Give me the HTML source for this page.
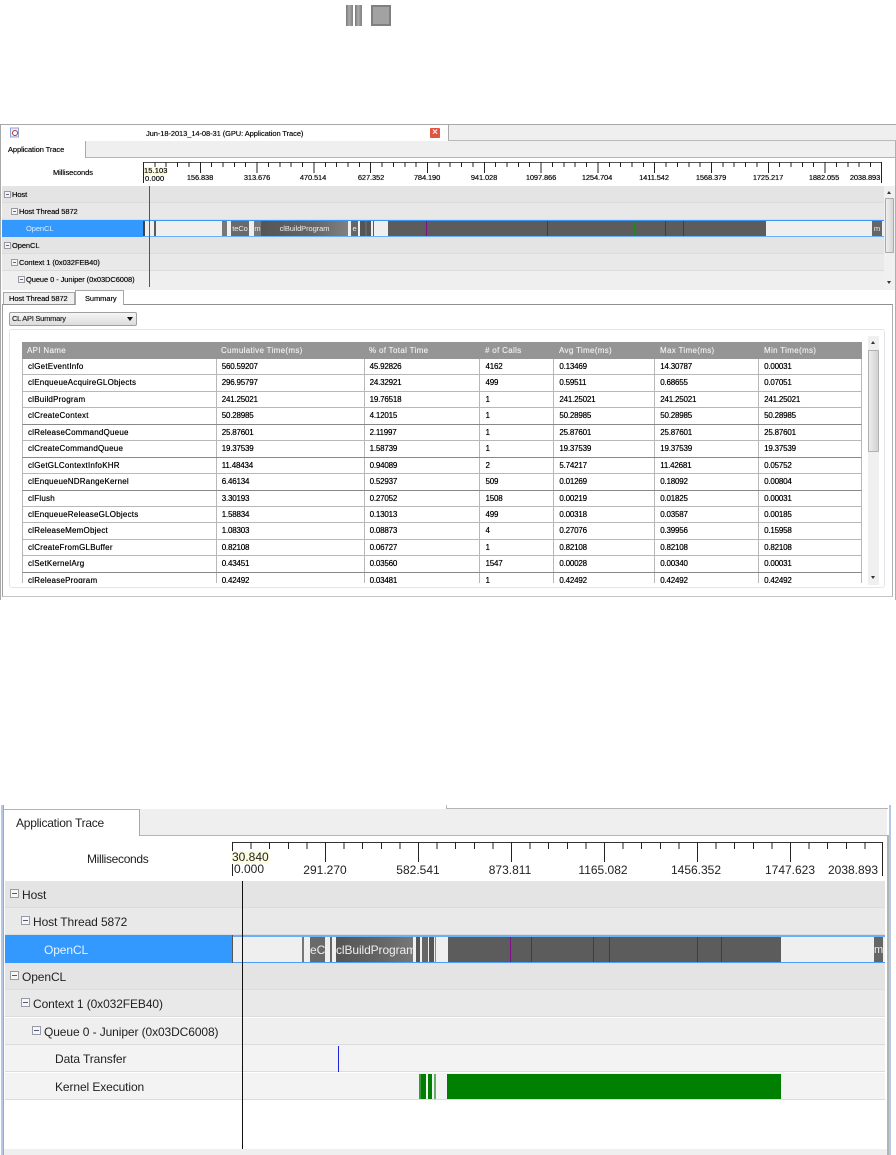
<!DOCTYPE html>
<html><head><meta charset="utf-8"><title>Application Trace</title>
<style>
html,body{margin:0;padding:0;background:#fff}
body{width:896px;height:1155px;position:relative;overflow:hidden;font-family:"Liberation Sans",sans-serif;color:#111}
.a{position:absolute}
.t{position:absolute;white-space:nowrap}
#top{position:absolute;left:0;top:0;width:896px;height:620px;font-size:7.5px;letter-spacing:-.08px;filter:blur(.2px);text-shadow:0 0 .4px #000}
.lab{position:absolute;top:173px;width:60px;text-align:center;font-size:7.5px;line-height:10px;color:#111;letter-spacing:-.12px}
.row{position:absolute;left:2px;width:882px;height:17px;box-sizing:border-box;border-bottom:1px solid #dcdcdc;line-height:18px;font-size:7.5px}
.box{position:absolute;top:5px;left:0;width:5px;height:5px;border:1px solid #9a9aa4;background:#f4f4f4}
.box:after{content:"";position:absolute;left:1px;top:2px;width:3px;height:1px;background:#667}
.b{position:absolute;background:#5c5c5c}
.txtb{color:#eee;text-align:center;overflow:hidden;white-space:nowrap}
#tbl{position:absolute;left:22px;top:342px;width:840px;height:241px;overflow:hidden;font-size:8px}
.r{display:flex;height:16.44px;box-sizing:border-box;border-bottom:1px solid #b8b8b8;border-left:1px solid #b8b8b8;border-right:1px solid #b8b8b8;line-height:16.5px;color:#000}
.r.d{border-bottom-color:#888}
.r.h{background:#959595;color:#eee;border:0;height:17px;line-height:18px;text-shadow:0 0 .4px #eee}
.r span{display:block;box-sizing:border-box;padding-left:5px;border-right:1px solid #b8b8b8;height:100%;overflow:hidden;white-space:nowrap;letter-spacing:-.2px}
.r .c1{letter-spacing:.22px}
.r.h span{border-right:0;letter-spacing:.32px}
.c1{width:194px}.c2{width:148px}.c3{width:116px}.c4{width:74px}.c5{width:101px}.c6{width:104px}.c7{width:102px;border-right:0!important}
.row2{position:absolute;left:5px;width:880px;height:27.4px;box-sizing:border-box;border-bottom:1px solid #dcdcdc;line-height:28px;font-size:12px;color:#222;letter-spacing:-.1px}
.box2{position:absolute;top:8px;width:7px;height:7px;border:1px solid #9a9aa4;background:#f6f6f6}
.box2:after{content:"";position:absolute;left:1px;top:3px;width:5px;height:1px;background:#4a5a80}
.lab2{position:absolute;top:863px;width:70px;text-align:center;font-size:12px;line-height:14px;color:#222}
</style></head>
<body>

<div id="top">
  <!-- pause / stop -->
  <div class="a" style="left:346px;top:5px;width:7px;height:21px;background:linear-gradient(90deg,#777,#aaa 45%,#808080)"></div>
  <div class="a" style="left:355px;top:5px;width:7px;height:21px;background:linear-gradient(90deg,#777,#aaa 45%,#808080)"></div>
  <div class="a" style="left:371px;top:5px;width:20px;height:21px;box-sizing:border-box;border:2px solid #808080;background:#a2a2a2"></div>

  <!-- frame -->
  <div class="a" style="left:0;top:124px;width:896px;height:1px;background:#a8a8a8"></div>
  <div class="a" style="left:0;top:125px;width:1px;height:475px;background:#a8a8a8"></div>
  <div class="a" style="left:895px;top:125px;width:1px;height:475px;background:#b0b0b0"></div>
  <div class="a" style="left:448px;top:125px;width:447px;height:15px;background:#efefef;border-left:1px solid #aaa;border-bottom:1px solid #bbb"></div>
  <div class="a" style="left:1px;top:141px;width:894px;height:16px;background:#efefef;border-bottom:1px solid #b4b4b4"></div>
  <div class="a" style="left:1px;top:141px;width:84px;height:17px;background:#fff;border-right:1px solid #aaa"></div>
  <div class="t" style="left:8px;top:144px;line-height:11px">Application Trace</div>

  <!-- title -->
  <svg class="a" style="left:10px;top:127px" width="10" height="11" viewBox="0 0 10 11"><rect x=".5" y="1" width="8" height="9" fill="#e8eefc" stroke="#8da4d8"/><circle cx="5" cy="6" r="2.5" fill="#fff" stroke="#c03030"/></svg>
  <div class="t" style="left:146px;top:128px;line-height:11px">Jun-18-2013_14-08-31 (GPU: Application Trace)</div>
  <div class="a" style="left:430px;top:128px;width:10px;height:10px;background:#e0563c;border-radius:1px;color:#fde;font-size:10px;line-height:10px;text-align:center;font-weight:bold;text-shadow:none">×</div>

  <!-- ruler -->
  <div class="t" style="left:53px;top:167px;line-height:11px">Milliseconds</div>
  <div class="a" style="left:143px;top:162px;width:738px;height:1px;background:#555"></div>
  <div class="a" style="left:143px;top:162px;width:738px;height:5px;background:repeating-linear-gradient(90deg,#222 0 1px,transparent 1px 11.36px)"></div>
  <div class="a" style="left:143px;top:162px;width:738px;height:11px;background:repeating-linear-gradient(90deg,#222 0 1px,transparent 1px 56.8px)"></div>
  <div class="a" style="left:143px;top:162px;width:1px;height:21px;background:#222"></div>
  <div class="a" style="left:881px;top:162px;width:1px;height:21px;background:#222"></div>
  <div class="a" style="left:144px;top:167px;width:23px;height:8px;background:#fdfbe0"></div>
  <div class="t" style="left:144px;top:166px;font-size:7.5px;line-height:10px;color:#111;letter-spacing:.1px">15.103</div>
  <div class="t" style="left:145px;top:174px;font-size:7.5px;line-height:10px;color:#111;letter-spacing:.1px">0.000</div>
  <div class="lab" style="left:170px">156.838</div>
  <div class="lab" style="left:227px">313.676</div>
  <div class="lab" style="left:283px">470.514</div>
  <div class="lab" style="left:341px">627.352</div>
  <div class="lab" style="left:397px">784.190</div>
  <div class="lab" style="left:454px">941.028</div>
  <div class="lab" style="left:511px">1097.866</div>
  <div class="lab" style="left:567px">1254.704</div>
  <div class="lab" style="left:624px">1411.542</div>
  <div class="lab" style="left:681px">1568.379</div>
  <div class="lab" style="left:738px">1725.217</div>
  <div class="lab" style="left:794px">1882.055</div>
  <div class="lab" style="left:835px">2038.893</div>

  <!-- rows -->
  <div class="row" style="top:186px;background:#e4e4e4"><i class="box" style="left:2px"></i><span class="t" style="left:10px">Host</span></div>
  <div class="row" style="top:203px;background:#e8e8e8"><i class="box" style="left:9px"></i><span class="t" style="left:17px">Host Thread 5872</span></div>
  <div class="row" style="top:220px;background:#3399ff;color:#dfeeff;border:0;text-shadow:none"><span class="t" style="left:24px">OpenCL</span></div>
  <div class="row" style="top:237px;background:#e4e4e4"><i class="box" style="left:2px"></i><span class="t" style="left:10px">OpenCL</span></div>
  <div class="row" style="top:254px;background:#e9e9e9"><i class="box" style="left:9px"></i><span class="t" style="left:17px">Context 1 (0x032FEB40)</span></div>
  <div class="row" style="top:271px;height:19px;background:#efefef;border:0"><i class="box" style="left:16px"></i><span class="t" style="left:24px">Queue 0 - Juniper (0x03DC6008)</span></div>

  <!-- track -->
  <div class="a" style="left:143px;top:220px;width:741px;height:17px;box-sizing:border-box;background:#efefef;border-top:1px solid #3d96f5;border-bottom:1px solid #6ab0f8"></div>
  <div class="b" style="left:143px;top:221px;width:2px;height:15px;background:#444"></div>
  <div class="b" style="left:154px;top:221px;width:2px;height:15px"></div>
  <div class="b" style="left:222px;top:221px;width:5px;height:15px;background:#777"></div>
  <div class="b txtb" style="left:231px;top:221px;width:18px;height:15px;line-height:16px;background:#6a6a6a;text-shadow:none">teCo</div>
  <div class="b txtb" style="left:254px;top:221px;width:7px;height:15px;line-height:16px;background:#777;text-shadow:none">m</div>
  <div class="b txtb" style="left:261px;top:221px;width:87px;height:15px;line-height:16px;background:linear-gradient(90deg,#555,#666 60%,#808080);text-shadow:none">clBuildProgram</div>
  <div class="b txtb" style="left:351px;top:221px;width:7px;height:15px;line-height:16px;background:#666;text-shadow:none">e</div>
  <div class="b" style="left:360px;top:221px;width:11px;height:15px;background:linear-gradient(90deg,#555 0 50%,#777 50% 60%,#555 60%)"></div>
  <div class="b" style="left:373px;top:221px;width:1px;height:15px"></div>
  <div class="b" style="left:388px;top:221px;width:378px;height:15px"></div>
  <div class="a" style="left:426px;top:221px;width:1px;height:15px;background:#80108a"></div>
  <div class="a" style="left:547px;top:221px;width:1px;height:15px;background:#701a70"></div>
  <div class="a" style="left:634px;top:221px;width:1px;height:15px;background:#1f8a1f"></div>
  <div class="a" style="left:665px;top:221px;width:1px;height:15px;background:#80108a"></div>
  <div class="a" style="left:683px;top:221px;width:1px;height:15px;background:#80108a"></div>
  <div class="b txtb" style="left:872px;top:221px;width:10px;height:15px;line-height:16px;background:#666;text-shadow:none">m</div>

  <div class="a" style="left:149px;top:186px;width:1px;height:101px;background:#555"></div>

  <!-- scrollbar -->
  <div class="a" style="left:884px;top:186px;width:11px;height:104px;background:#f0f0f0"></div>
  <div class="a" style="left:885px;top:198px;width:9px;height:55px;box-sizing:border-box;border:1px solid #aaa;border-radius:1px;background:linear-gradient(90deg,#eee,#d6d6d6)"></div>
  <div class="a" style="left:887px;top:191px;width:0;height:0;border:2px solid transparent;border-bottom:3px solid #333;border-top:0"></div>
  <div class="a" style="left:887px;top:281px;width:0;height:0;border:2px solid transparent;border-top:3px solid #333;border-bottom:0"></div>

  <!-- lower tabs -->
  <div class="a" style="left:3px;top:292px;width:72px;height:12px;background:#efefef;border:1px solid #a8a8a8;border-bottom:0;box-sizing:border-box"></div>
  <div class="t" style="left:9px;top:293px;line-height:11px">Host Thread 5872</div>
  <div class="a" style="left:75px;top:290px;width:49px;height:15px;background:#fff;border:1px solid #a8a8a8;border-bottom:0;box-sizing:border-box;z-index:2"></div>
  <div class="t" style="left:85px;top:293px;line-height:11px;z-index:3">Summary</div>
  <div class="a" style="left:2px;top:304px;width:891px;height:293px;box-sizing:border-box;border:1px solid #a0a0a0;border-top-color:#909090;border-bottom-color:#c4c4c4;border-right-color:#b0b0b0"></div>

  <!-- combo -->
  <div class="a" style="left:9px;top:312px;width:128px;height:14px;box-sizing:border-box;border:1px solid #a0a0a0;border-radius:2px;background:linear-gradient(#f6f6f6,#dcdcdc);line-height:12px;padding-left:2px;letter-spacing:-.25px;color:#333">CL API Summary</div>
  <div class="a" style="left:127px;top:317px;width:0;height:0;border:3px solid transparent;border-top:4px solid #111;border-bottom:0"></div>

  <!-- group box -->
  <div class="a" style="left:9px;top:329px;width:876px;height:259px;box-sizing:border-box;border:1px solid #e2e6ea;border-radius:3px"></div>

  <div id="tbl">
    <div class="r h"><span class="c1">API Name</span><span class="c2">Cumulative Time(ms)</span><span class="c3">% of Total Time</span><span class="c4"># of Calls</span><span class="c5">Avg Time(ms)</span><span class="c6">Max Time(ms)</span><span class="c7">Min Time(ms)</span></div>
    <div class="r"><span class="c1">clGetEventInfo</span><span class="c2">560.59207</span><span class="c3">45.92826</span><span class="c4">4162</span><span class="c5">0.13469</span><span class="c6">14.30787</span><span class="c7">0.00031</span></div>
    <div class="r"><span class="c1">clEnqueueAcquireGLObjects</span><span class="c2">296.95797</span><span class="c3">24.32921</span><span class="c4">499</span><span class="c5">0.59511</span><span class="c6">0.68655</span><span class="c7">0.07051</span></div>
    <div class="r"><span class="c1">clBuildProgram</span><span class="c2">241.25021</span><span class="c3">19.76518</span><span class="c4">1</span><span class="c5">241.25021</span><span class="c6">241.25021</span><span class="c7">241.25021</span></div>
    <div class="r d"><span class="c1">clCreateContext</span><span class="c2">50.28985</span><span class="c3">4.12015</span><span class="c4">1</span><span class="c5">50.28985</span><span class="c6">50.28985</span><span class="c7">50.28985</span></div>
    <div class="r"><span class="c1">clReleaseCommandQueue</span><span class="c2">25.87601</span><span class="c3">2.11997</span><span class="c4">1</span><span class="c5">25.87601</span><span class="c6">25.87601</span><span class="c7">25.87601</span></div>
    <div class="r d"><span class="c1">clCreateCommandQueue</span><span class="c2">19.37539</span><span class="c3">1.58739</span><span class="c4">1</span><span class="c5">19.37539</span><span class="c6">19.37539</span><span class="c7">19.37539</span></div>
    <div class="r"><span class="c1">clGetGLContextInfoKHR</span><span class="c2">11.48434</span><span class="c3">0.94089</span><span class="c4">2</span><span class="c5">5.74217</span><span class="c6">11.42681</span><span class="c7">0.05752</span></div>
    <div class="r d"><span class="c1">clEnqueueNDRangeKernel</span><span class="c2">6.46134</span><span class="c3">0.52937</span><span class="c4">509</span><span class="c5">0.01269</span><span class="c6">0.18092</span><span class="c7">0.00804</span></div>
    <div class="r"><span class="c1">clFlush</span><span class="c2">3.30193</span><span class="c3">0.27052</span><span class="c4">1508</span><span class="c5">0.00219</span><span class="c6">0.01825</span><span class="c7">0.00031</span></div>
    <div class="r"><span class="c1">clEnqueueReleaseGLObjects</span><span class="c2">1.58834</span><span class="c3">0.13013</span><span class="c4">499</span><span class="c5">0.00318</span><span class="c6">0.03587</span><span class="c7">0.00185</span></div>
    <div class="r"><span class="c1">clReleaseMemObject</span><span class="c2">1.08303</span><span class="c3">0.08873</span><span class="c4">4</span><span class="c5">0.27076</span><span class="c6">0.39956</span><span class="c7">0.15958</span></div>
    <div class="r"><span class="c1">clCreateFromGLBuffer</span><span class="c2">0.82108</span><span class="c3">0.06727</span><span class="c4">1</span><span class="c5">0.82108</span><span class="c6">0.82108</span><span class="c7">0.82108</span></div>
    <div class="r d"><span class="c1">clSetKernelArg</span><span class="c2">0.43451</span><span class="c3">0.03560</span><span class="c4">1547</span><span class="c5">0.00028</span><span class="c6">0.00340</span><span class="c7">0.00031</span></div>
    <div class="r"><span class="c1">clReleaseProgram</span><span class="c2">0.42492</span><span class="c3">0.03481</span><span class="c4">1</span><span class="c5">0.42492</span><span class="c6">0.42492</span><span class="c7">0.42492</span></div>
  </div>

  <!-- table scrollbar -->
  <div class="a" style="left:868px;top:336px;width:11px;height:249px;background:#f0f0f0"></div>
  <div class="a" style="left:868px;top:350px;width:11px;height:102px;box-sizing:border-box;border:1px solid #b0b0b0;border-radius:1px;background:linear-gradient(90deg,#ececec,#d2d2d2)"></div>
  <div class="a" style="left:871px;top:341px;width:0;height:0;border:2px solid transparent;border-bottom:3px solid #333;border-top:0"></div>
  <div class="a" style="left:871px;top:576px;width:0;height:0;border:2px solid transparent;border-top:3px solid #333;border-bottom:0"></div>
</div>

<div id="bottom" style="position:absolute;left:0;top:0;width:896px;height:1155px;pointer-events:none">
  <!-- frame -->
  <div class="a" style="left:1px;top:805px;width:2px;height:350px;background:#b4c8e4"></div>
  <div class="a" style="left:3px;top:805px;width:1px;height:350px;background:#a8a8a8"></div>
  <div class="a" style="left:446px;top:808px;width:442px;height:1px;background:#b4b4b4"></div>
  <div class="a" style="left:446px;top:805px;width:1px;height:3px;background:#b4b4b4"></div>
  <div class="a" style="left:887px;top:835px;width:2px;height:320px;background:#b4b4b4"></div>
  <div class="a" style="left:889px;top:805px;width:2px;height:350px;background:#b4c8e4"></div>
  <div class="a" style="left:4px;top:809px;width:883px;height:26px;background:#efefef"></div>
  <div class="a" style="left:4px;top:835px;width:883px;height:1px;background:#b4b4b8"></div>
  <div class="a" style="left:4px;top:809px;width:136px;height:27px;box-sizing:border-box;background:#fff;border-top:1px solid #b4b4b4;border-right:1px solid #a8a8a8"></div>
  <div class="t" style="left:16px;top:816px;font-size:12px;line-height:14px;color:#222;letter-spacing:-.24px">Application Trace</div>

  <!-- ruler -->
  <div class="t" style="left:87px;top:852px;font-size:12px;line-height:14px;color:#222;letter-spacing:-.33px">Milliseconds</div>
  <div class="a" style="left:232px;top:842px;width:651px;height:1px;background:#333"></div>
  <div class="a" style="left:232px;top:842px;width:651px;height:7px;background:repeating-linear-gradient(90deg,#222 0 1px,transparent 1px 18.6px)"></div>
  <div class="a" style="left:232px;top:842px;width:651px;height:20px;background:repeating-linear-gradient(90deg,#222 0 1px,transparent 1px 93px)"></div>
  <div class="a" style="left:232px;top:842px;width:1px;height:34px;background:#222"></div>
  <div class="a" style="left:882px;top:842px;width:1px;height:34px;background:#222"></div>
  <div class="a" style="left:232px;top:851px;width:37px;height:13px;background:#fdfbe0"></div>
  <div class="t" style="left:232px;top:850px;font-size:12px;line-height:14px;color:#222">30.840</div>
  <div class="t" style="left:234px;top:862px;font-size:12px;line-height:14px;color:#222">0.000</div>
  <div class="lab2" style="left:290px">291.270</div>
  <div class="lab2" style="left:383px">582.541</div>
  <div class="lab2" style="left:475px">873.811</div>
  <div class="lab2" style="left:568px">1165.082</div>
  <div class="lab2" style="left:661px">1456.352</div>
  <div class="lab2" style="left:755px">1747.623</div>
  <div class="lab2" style="left:818px">2038.893</div>

  <!-- rows -->
  <div class="row2" style="top:881px;background:#e4e4e4"><i class="box2" style="left:5px"></i><span class="t" style="left:17px">Host</span></div>
  <div class="row2" style="top:908px;background:#e9e9e9"><i class="box2" style="left:16px"></i><span class="t" style="left:28px">Host Thread 5872</span></div>
  <div class="row2" style="top:935px;height:28px;background:#3399ff;color:#e6f2ff;border:0;line-height:30px"><span class="t" style="left:39px">OpenCL</span></div>
  <div class="row2" style="top:963px;background:#e4e4e4"><i class="box2" style="left:5px"></i><span class="t" style="left:17px">OpenCL</span></div>
  <div class="row2" style="top:990px;background:#e9e9e9"><i class="box2" style="left:16px"></i><span class="t" style="left:28px">Context 1 (0x032FEB40)</span></div>
  <div class="row2" style="top:1018px;background:#efefef"><i class="box2" style="left:27px"></i><span class="t" style="left:39px">Queue 0 - Juniper (0x03DC6008)</span></div>
  <div class="row2" style="top:1045px;background:#f3f3f3"><span class="t" style="left:50px">Data Transfer</span></div>
  <div class="row2" style="top:1073px;height:27px;background:#f3f3f3"><span class="t" style="left:50px">Kernel Execution</span></div>
  <div class="a" style="left:4px;top:1149px;width:883px;height:6px;background:#efefef"></div>

  <!-- track -->
  <div class="a" style="left:232px;top:935px;width:653px;height:28px;box-sizing:border-box;background:#efefef;border-top:2px solid #6ab0f8;border-bottom:1px solid #4a9cf5"></div>
  <div class="a" style="left:232px;top:935px;width:1px;height:28px;background:#555"></div>
  <div class="b" style="left:302px;top:937px;width:2px;height:25px;background:#777"></div>
  <div class="b txtb" style="left:310px;top:937px;width:15px;height:25px;line-height:27px;font-size:12px;background:#6a6a6a">eC</div>
  <div class="b" style="left:330px;top:937px;width:2px;height:25px;background:#666"></div>
  <div class="b txtb" style="left:336px;top:937px;width:77px;height:25px;line-height:27px;font-size:12px;letter-spacing:-.1px;background:linear-gradient(90deg,#555,#666 60%,#777)">clBuildProgram</div>
  <div class="b" style="left:416px;top:937px;width:4px;height:25px;background:#555"></div>
  <div class="b" style="left:422px;top:937px;width:6px;height:25px;background:#666"></div>
  <div class="b" style="left:429px;top:937px;width:5px;height:25px;background:#555"></div>
  <div class="b" style="left:435px;top:937px;width:1px;height:25px;background:#888"></div>
  <div class="b" style="left:448px;top:937px;width:333px;height:25px"></div>
  <div class="a" style="left:510px;top:937px;width:1px;height:25px;background:#80108a"></div>
  <div class="a" style="left:531px;top:937px;width:1px;height:25px;background:#80108a"></div>
  <div class="a" style="left:593px;top:937px;width:1px;height:25px;background:#80108a"></div>
  <div class="a" style="left:609px;top:937px;width:1px;height:25px;background:#80108a"></div>
  <div class="a" style="left:697px;top:937px;width:1px;height:25px;background:#80108a"></div>
  <div class="a" style="left:721px;top:937px;width:1px;height:25px;background:#80108a"></div>
  <div class="b txtb" style="left:874px;top:937px;width:9px;height:25px;line-height:27px;font-size:11px;background:#666">m</div>

  <!-- data / kernel -->
  <div class="a" style="left:338px;top:1046px;width:1px;height:26px;background:#2222dd"></div>
  <div class="a" style="left:419px;top:1074px;width:2px;height:25px;background:#3a9a3a"></div>
  <div class="a" style="left:421px;top:1074px;width:5px;height:25px;background:#008000"></div>
  <div class="a" style="left:428px;top:1074px;width:4px;height:25px;background:#008000"></div>
  <div class="a" style="left:434px;top:1074px;width:2px;height:25px;background:#66b066"></div>
  <div class="a" style="left:447px;top:1074px;width:334px;height:25px;background:#008000"></div>

  <div class="a" style="left:242px;top:881px;width:1px;height:268px;background:#111"></div>
</div>
</body></html>
